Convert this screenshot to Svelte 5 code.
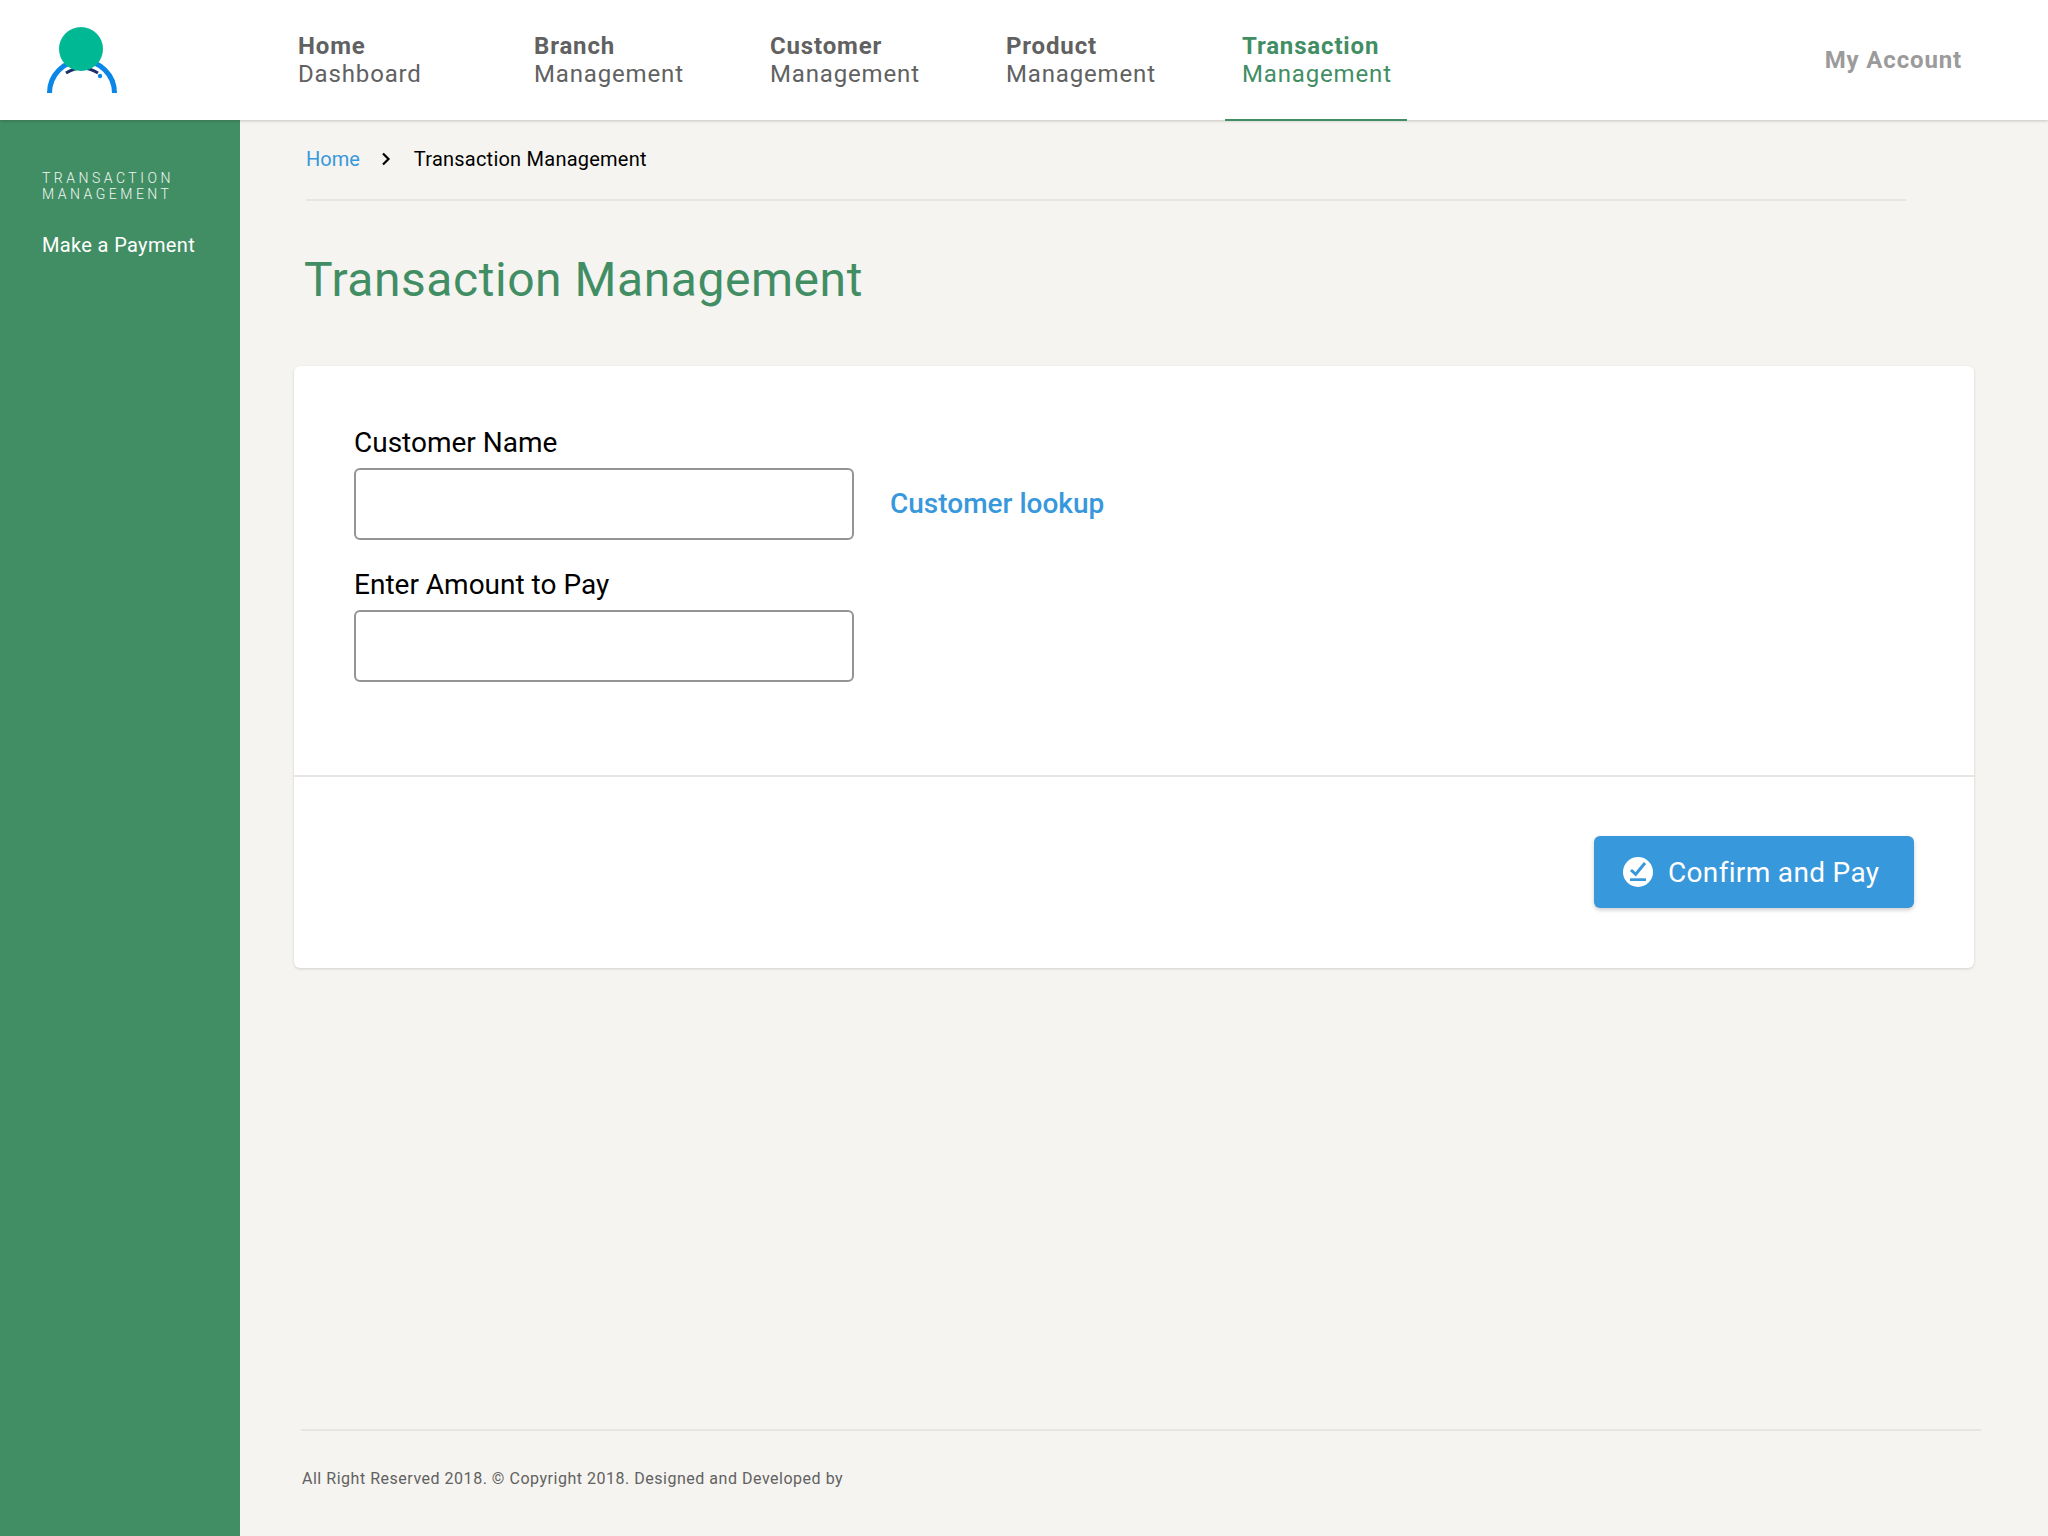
<script lang="ts">
  const navItems = [
    { top: "Home", bottom: "Dashboard" },
    { top: "Branch", bottom: "Management" },
    { top: "Customer", bottom: "Management" },
    { top: "Product", bottom: "Management" },
    { top: "Transaction", bottom: "Management", active: true },
  ];
</script>

<div class="page">
  <header class="topbar">
    <div class="logo">
      <svg width="72" height="68" viewBox="0 0 72 68">
        <path d="M3.5 66 A32 32 0 0 1 68.500 66" fill="none" stroke="#0a86e6" stroke-width="5" />
        <path d="M20 46 Q36 36 52 46" fill="none" stroke="#1c2f6b" stroke-width="3" />
        <circle cx="54" cy="49" r="2.200" fill="#0a86e6" />
        <circle cx="35" cy="22" r="22" fill="#00b894" />
      </svg>
    </div>
    <nav class="nav">
      {#each navItems as item}
        <a class="nav-item" class:active={item.active} href="#top">
          <strong>{item.top}</strong>
          <span>{item.bottom}</span>
        </a>
      {/each}
    </nav>
    <a class="account" href="#top">My Account</a>
  </header>

  <div class="body">
    <aside class="sidebar">
      <div class="side-title">TRANSACTION<br />MANAGEMENT</div>
      <a class="side-link" href="#top">Make a Payment</a>
    </aside>

    <main class="content">
      <div class="breadcrumb">
        <a href="#top">Home</a>
        <svg width="10" height="14" viewBox="0 0 10 14">
          <path d="M2 1.500 L7.500 7 L2 12.500" fill="none" stroke="#000" stroke-width="2.200" />
        </svg>
        <span>Transaction Management</span>
      </div>

      <h1>Transaction Management</h1>

      <section class="card">
        <div class="form">
          <label for="customer">Customer Name</label>
          <div class="row">
            <input id="customer" type="text" />
            <a class="lookup" href="#top">Customer lookup</a>
          </div>
          <label for="amount">Enter Amount to Pay</label>
          <div class="row">
            <input id="amount" type="text" />
          </div>
        </div>
        <div class="actions">
          <button type="button">
            <svg width="30" height="30" viewBox="0 0 30 30">
              <circle cx="15" cy="15" r="15" fill="#fff" />
              <path d="M8 13 L12.700 17.300 L22 6" fill="none" stroke="#3898dc" stroke-width="3" />
              <rect x="7" y="21.300" width="16" height="2.700" fill="#3898dc" />
            </svg>
            Confirm and Pay
          </button>
        </div>
      </section>

      <footer class="footer">All Right Reserved 2018. © Copyright 2018. Designed and Developed by</footer>
    </main>
  </div>
</div>

<style>
  :global(body) {
    margin: 0;
    font-family: Roboto, "Liberation Sans", sans-serif;
  }
  a {
    text-decoration: none;
  }
  .page {
    display: flex;
    flex-direction: column;
    height: 1536px;
    background: #f5f4f0;
  }
  .topbar {
    display: flex;
    align-items: stretch;
    height: 120px;
    box-sizing: border-box;
    background: #fff;
    box-shadow: 0 1px 3px rgba(0, 0, 0, 0.2);
    position: relative;
    z-index: 1;
  }
  .logo {
    width: 281px;
    flex: none;
    padding: 27px 0 0 46px;
    box-sizing: border-box;
  }
  .nav {
    display: flex;
    flex: 1;
  }
  .nav-item {
    display: flex;
    flex-direction: column;
    width: 236px;
    box-sizing: border-box;
    padding: 32px 17px 0;
    font-size: 24px;
    line-height: 28px;
    letter-spacing: 0.85px;
    color: #616161;
  }
  .nav-item strong {
    font-weight: 700;
  }
  .nav-item.active {
    width: 182px;
    height: 121px;
    color: #428e64;
    border-bottom: 2px solid #428e64;
  }
  .account {
    align-self: center;
    margin-right: 86px;
    font-size: 24px;
    font-weight: 700;
    letter-spacing: 0.85px;
    color: #9b9b9b;
  }
  .body {
    display: flex;
    flex: 1;
  }
  .sidebar {
    width: 240px;
    flex: none;
    box-sizing: border-box;
    padding: 50px 0 0 42px;
    background: #428e64;
    color: #fff;
  }
  .side-title {
    font-size: 14px;
    line-height: 16px;
    letter-spacing: 3.5px;
    font-weight: 300;
    color: #f0f7f3;
  }
  .side-link {
    display: block;
    margin-top: 31px;
    font-size: 20px;
    line-height: 24px;
    letter-spacing: 0.35px;
    color: #fff;
  }
  .content {
    flex: 1;
    display: flex;
    flex-direction: column;
    padding-left: 54px;
    min-width: 0;
  }
  .breadcrumb {
    display: flex;
    align-items: center;
    gap: 21px;
    width: 1600px;
    margin-left: 12px;
    height: 81px;
    box-sizing: border-box;
    border-bottom: 2px solid #e6e5e1;
    font-size: 20px;
    padding-bottom: 1px;
    letter-spacing: 0.23px;
    color: #000;
  }
  .breadcrumb a {
    color: #3898dc;
    letter-spacing: 0;
  }
  .breadcrumb span {
    margin-left: 2px;
  }
  h1 {
    margin: 50px 0 0 10px;
    font-size: 48px;
    line-height: 58px;
    font-weight: 400;
    letter-spacing: 0.55px;
    color: #428e64;
  }
  .card {
    width: 1680px;
    margin-top: 57px;
    background: #fff;
    border-radius: 6px;
    box-shadow: 0 1px 3px rgba(0, 0, 0, 0.15);
  }
  .form {
    display: flex;
    flex-direction: column;
    height: 411px;
    box-sizing: border-box;
    padding: 59px 60px 0;
    border-bottom: 2px solid #e6e5e1;
  }
  label {
    font-size: 28px;
    line-height: 36px;
    color: #000;
  }
  .row {
    display: flex;
    align-items: center;
    gap: 36px;
    margin: 7px 0 27px;
  }
  input {
    width: 500px;
    height: 72px;
    box-sizing: border-box;
    border: 2px solid #949494;
    border-radius: 6px;
    background: #fff;
  }
  .lookup {
    margin-bottom: 2px;
    font-size: 28px;
    font-weight: 500;
    color: #3898dc;
  }
  .actions {
    display: flex;
    justify-content: flex-end;
    padding: 59px 60px 60px;
  }
  button {
    display: flex;
    align-items: center;
    gap: 15px;
    width: 320px;
    height: 72px;
    padding: 0 0 0 29px;
    border: none;
    border-radius: 6px;
    background: #3898dc;
    color: #fff;
    font-family: inherit;
    font-size: 28px;
    letter-spacing: 0.33px;
    box-shadow: 0 2px 4px rgba(0, 0, 0, 0.2);
  }
  .footer {
    width: 1680px;
    margin: auto 0 0 7px;
    height: 107px;
    box-sizing: border-box;
    padding: 38px 0 0 1px;
    border-top: 2px solid #e6e5e1;
    font-size: 16px;
    line-height: 20px;
    letter-spacing: 0.52px;
    color: #616161;
  }
</style>
